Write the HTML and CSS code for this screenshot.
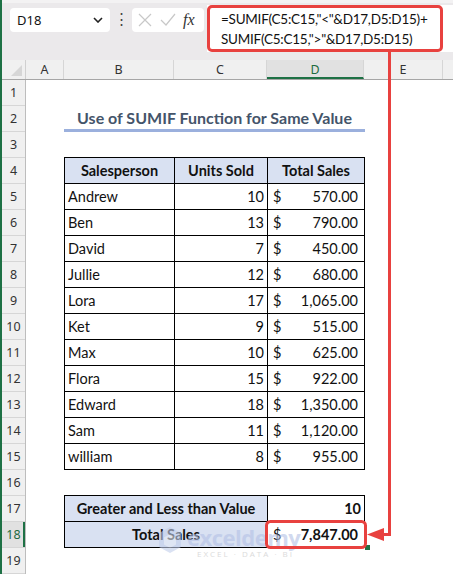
FILE: index.html
```html
<!DOCTYPE html>
<html lang="en">
<head>
  <meta charset="UTF-8">
  <title>SUMIF for Same Value</title>
  <link rel="stylesheet" href="styles.css">
</head>
<body>
<div class="app">

  <div class="formula-bar">
    <div class="name-box">
      <span>D18</span>
      <svg class="chev" width="10" height="6" viewBox="0 0 10 6"><path d="M1 1l4 4 4-4" fill="none" stroke="#222" stroke-width="1.6"/></svg>
    </div>
    <div class="dots">⋮</div>
    <div class="fx-box">
      <svg width="16" height="16" viewBox="0 0 16 16"><path d="M2 2l12 12M14 2L2 14" stroke="#c8c8c8" stroke-width="1.2" fill="none"/></svg>
      <svg width="18" height="16" viewBox="0 0 18 16"><path d="M2 8l5 5 9-11" stroke="#c8c8c8" stroke-width="1.2" fill="none"/></svg>
      <span class="fx">fx</span>
    </div>
    <div class="formula-input">
      <div class="formula-text">
        <div>=SUMIF(C5:C15,"&lt;"&amp;D17,D5:D15)+</div>
        <div>SUMIF(C5:C15,"&gt;"&amp;D17,D5:D15)</div>
      </div>
    </div>
  </div>

  <div class="col-heads">
    <div class="corner"><span class="tri"></span></div>
    <div class="ch col-a">A</div>
    <div class="ch col-b">B</div>
    <div class="ch col-c">C</div>
    <div class="ch col-d active">D</div>
    <div class="ch col-e">E</div>
    <div class="ch col-f"></div>
  </div>

  <div class="sheet">
    <div class="row-heads">
      <div class="rh">1</div><div class="rh">2</div><div class="rh">3</div><div class="rh">4</div>
      <div class="rh">5</div><div class="rh">6</div><div class="rh">7</div><div class="rh">8</div>
      <div class="rh">9</div><div class="rh">10</div><div class="rh">11</div><div class="rh">12</div>
      <div class="rh">13</div><div class="rh">14</div><div class="rh">15</div><div class="rh">16</div>
      <div class="rh">17</div><div class="rh active">18</div><div class="rh">19</div>
    </div>

    <div class="cells">
      <div class="blank"></div>
      <div class="title">Use of SUMIF Function for Same Value</div>
      <div class="blank"></div>

      <div class="data">
        <div class="hd">Salesperson</div><div class="hd">Units Sold</div><div class="hd">Total Sales</div>
        <div>Andrew</div><div class="num">10</div><div class="money"><span>$</span><span>570.00</span></div>
        <div>Ben</div><div class="num">13</div><div class="money"><span>$</span><span>790.00</span></div>
        <div>David</div><div class="num">7</div><div class="money"><span>$</span><span>450.00</span></div>
        <div>Jullie</div><div class="num">12</div><div class="money"><span>$</span><span>680.00</span></div>
        <div>Lora</div><div class="num">17</div><div class="money"><span>$</span><span>1,065.00</span></div>
        <div>Ket</div><div class="num">9</div><div class="money"><span>$</span><span>515.00</span></div>
        <div>Max</div><div class="num">10</div><div class="money"><span>$</span><span>625.00</span></div>
        <div>Flora</div><div class="num">15</div><div class="money"><span>$</span><span>922.00</span></div>
        <div>Edward</div><div class="num">18</div><div class="money"><span>$</span><span>1,350.00</span></div>
        <div>Sam</div><div class="num">11</div><div class="money"><span>$</span><span>1,120.00</span></div>
        <div>william</div><div class="num">8</div><div class="money"><span>$</span><span>955.00</span></div>
      </div>

      <div class="blank"></div>

      <div class="summary">
        <div class="lbl">Greater and Less than Value</div><div class="num bold">10</div>
        <div class="lbl">Total Sales</div><div class="money"><span>$</span><span class="bold">7,847.00</span></div>
      </div>
    </div>
  </div>

  <div class="watermark">
    <svg width="26" height="28" viewBox="0 0 26 28"><path d="M13 1l11 6v14l-11 6-11-6V7z" fill="#c3cfec"/><path d="M13 8l6 3.5v7L13 22l-6-3.5v-7z" fill="#e4eaf6"/></svg>
    <div class="wm-text">
      <div class="wm-name">exceldemy</div>
      <div class="wm-sub">EXCEL · DATA · BI</div>
    </div>
  </div>

  <div class="fill-handle"></div>

  <svg class="callout" width="453" height="574" viewBox="0 0 453 574">
    <path d="M389.5 52V534.5H380" fill="none" stroke="#e8413f" stroke-width="3"/>
    <path d="M367 534.5L384 528V541z" fill="#e8413f"/>
    <rect x="266.5" y="521.5" width="99" height="26" rx="4" fill="none" stroke="#e8413f" stroke-width="3"/>
  </svg>
</div>
</body>
</html>
```

FILE: styles.css
```css
html, body {
  margin: 0;
  padding: 0;
  background: #fff;
}

.app {
  position: relative;
  width: 451px;
  height: 574px;
  overflow: hidden;
  border-left: 2px solid #1e7145;
  font-family: Lato, "Liberation Sans", sans-serif;
  color: #111;
}

/* formula bar */
.formula-bar {
  display: flex;
  align-items: flex-start;
  height: 60px;
  padding: 8px 0 0 8px;
  box-sizing: border-box;
  background: #ebe9eb;
  border-top: 3px solid #f3f2f3;
}

.name-box {
  width: 100px;
  height: 24px;
  box-sizing: border-box;
  background: #fff;
  border-radius: 4px;
  display: flex;
  align-items: center;
  justify-content: space-between;
  padding: 0 7px;
  font-family: "Noto Sans", sans-serif;
  font-size: 13px;
  margin-top: -3px;
}

.dots {
  width: 22px;
  text-align: center;
  font-size: 15px;
  line-height: 20px;
  color: #444;
  margin-top: -3px;
}

.fx-box {
  width: 72px;
  height: 24px;
  box-sizing: border-box;
  background: #fff;
  border-radius: 4px;
  display: flex;
  align-items: center;
  gap: 6px;
  padding-left: 5px;
  margin-top: -3px;
}

.fx {
  font-family: "Liberation Serif", serif;
  font-style: italic;
  font-size: 16px;
  color: #333;
}

.formula-input {
  flex: 1;
  margin: -6px 0 0 3px;
  height: 47px;
  background: #fff;
}

.formula-text {
  width: 236px;
  height: 47px;
  box-sizing: border-box;
  border: 3px solid #e8413f;
  border-radius: 5px;
  padding: 1px 0 0 11px;
  font-size: 13.5px;
  letter-spacing: -0.25px;
  line-height: 20px;
  white-space: nowrap;
  overflow: hidden;
  color: #111;
}

/* column headers */
.col-heads {
  display: flex;
  height: 19px;
  background: #f0f0f0;
  border-bottom: 1px solid #a6a6a6;
  font-family: "Noto Sans", sans-serif;
  font-size: 12.5px;
  color: #333;
}

.corner {
  width: 24px;
  position: relative;
  border-right: 1px solid #d0d0d0;
  box-sizing: border-box;
}

.tri {
  position: absolute;
  right: 3px;
  bottom: 3px;
  border-style: solid;
  border-width: 0 0 11px 11px;
  border-color: transparent transparent #d6d6d6 transparent;
}

.ch {
  box-sizing: border-box;
  border-right: 1px solid #d6d6d6;
  text-align: center;
  line-height: 19px;
}

.col-a { width: 38px; }
.col-b { width: 110px; }
.col-c { width: 93px; }
.col-d { width: 97px; }
.col-e { width: 79px; }
.col-f { flex: 1; border-right: none; }

.ch.active {
  background: #e1e1e1;
  color: #1d6b3f;
  border-bottom: 2px solid #1e7145;
}

/* sheet body */
.sheet {
  display: flex;
}

.row-heads {
  width: 24px;
  background: #f0f0f0;
  border-right: 1px solid #bdbdbd;
  box-sizing: border-box;
  flex-shrink: 0;
}

.rh {
  height: 26px;
  box-sizing: border-box;
  border-bottom: 1px solid #d6d6d6;
  text-align: center;
  line-height: 26px;
  font-family: "Noto Sans", sans-serif;
  font-size: 12.5px;
  color: #333;
}

.rh.active {
  background: #e1e1e1;
  color: #1d6b3f;
  box-shadow: inset -2px 0 0 #1e7145;
}

.cells {
  padding-left: 38px;
  font-size: 14.5px;
}

.blank {
  height: 26px;
}

.title {
  width: 301px;
  height: 26px;
  box-sizing: border-box;
  border-bottom: 3px solid #9bb0dd;
  text-align: center;
  font-weight: bold;
  font-size: 16px;
  line-height: 24px;
  color: #44546a;
}

.data, .summary {
  display: grid;
  grid-template-columns: 110px 93px 97px;
  grid-auto-rows: 26px;
  width: 301px;
  box-sizing: border-box;
  border-left: 1px solid #000;
  border-top: 1px solid #000;
  margin-top: -1px;
}

.summary {
  grid-template-columns: 203px 97px;
}

.data > div, .summary > div {
  box-sizing: border-box;
  border-right: 1px solid #000;
  border-bottom: 1px solid #000;
  padding: 0 3px;
  line-height: 25px;
  white-space: nowrap;
}

.data .hd {
  background: #d9e1f2;
  font-weight: bold;
  text-align: center;
}

.num {
  text-align: right;
}

.money {
  display: flex;
  justify-content: space-between;
  padding: 0 6px 0 5px !important;
}

.bold {
  font-weight: bold;
}

.summary .lbl {
  background: #d9e1f2;
  font-weight: bold;
  text-align: center;
}

/* overlays */
.watermark {
  position: absolute;
  left: 155px;
  top: 526px;
  display: flex;
  gap: 4px;
  opacity: 0.6;
  pointer-events: none;
}

.wm-name {
  font-family: "Open Sans", sans-serif;
  font-weight: bold;
  font-size: 22px;
  line-height: 22px;
  color: #b3c1e5;
  letter-spacing: -0.5px;
}

.wm-sub {
  font-family: "Open Sans", sans-serif;
  font-size: 8px;
  letter-spacing: 2px;
  color: #c4c4c4;
  padding-left: 10px;
}

.fill-handle {
  position: absolute;
  left: 363px;
  top: 545px;
  width: 5px;
  height: 5px;
  background: #1e7145;
}

.callout {
  position: absolute;
  left: -2px;
  top: 0;
  pointer-events: none;
}
```
